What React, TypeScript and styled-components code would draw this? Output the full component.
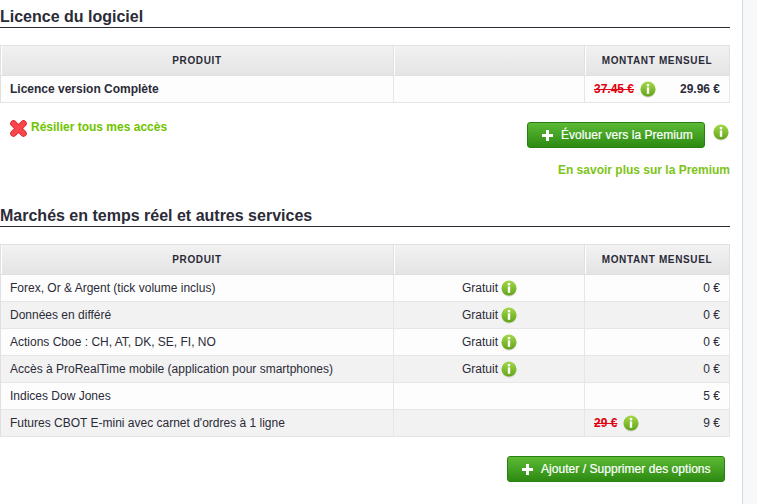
import React from 'react';
import styled, { createGlobalStyle } from 'styled-components';

const GlobalStyle = createGlobalStyle`
  html, body {
    margin: 0;
    padding: 0;
    background: #fff;
    overflow: hidden;
  }
`;

const Page = styled.div`
  display: flex;
  width: 757px;
  height: 504px;
  overflow: hidden;
  font-family: 'Liberation Sans', Arial, sans-serif;
  color: #2b2b38;
`;

const Content = styled.div`
  width: 730px;
  flex: none;
`;

const Rail = styled.div`
  width: 14px;
  margin-left: 12px;
  flex: none;
  background: #f7f8fa;
  border-left: 1px solid #d5d9e0;
`;

const Heading = styled.h2<{ $top: number }>`
  margin: ${({ $top }) => $top}px 0 0;
  padding-bottom: 1px;
  height: 19px;
  font-size: 16px;
  line-height: 19px;
  font-weight: bold;
  border-bottom: 1px solid #2b2b33;
`;

const Table = styled.div`
  margin-top: 17px;
  display: grid;
  grid-template-columns: 393px 191px 145px;
  border-top: 1px solid #e0e0e0;
  border-left: 1px solid #e0e0e0;
`;

const HeadCell = styled.div`
  height: 29px;
  display: flex;
  align-items: center;
  justify-content: center;
  font-size: 10px;
  font-weight: bold;
  letter-spacing: 0.65px;
  background: linear-gradient(#f2f2f2, #e4e4e4);
  border-right: 1px solid #e0e0e0;
  border-bottom: 1px solid #e0e0e0;
  box-shadow: inset 1px 0 0 #fff;
`;

const Cell = styled.div<{ $alt?: boolean; $strong?: boolean }>`
  height: 26px;
  box-sizing: content-box;
  display: flex;
  align-items: center;
  font-size: 12px;
  font-weight: ${({ $strong }) => ($strong ? 'bold' : 'normal')};
  background: ${({ $alt }) => ($alt ? '#f2f2f2' : '#fdfdfd')};
  border-right: 1px solid #e6e6e6;
  border-bottom: 1px solid #e6e6e6;
`;

const NameCell = styled(Cell)`
  padding-left: 9px;
`;

const MiddleCell = styled(Cell)`
  padding-left: 68px;
  gap: 3px;
`;

const AmountCell = styled(Cell)`
  justify-content: space-between;
  padding: 0 9px;
`;

const AmountEnd = styled(Cell)`
  justify-content: flex-end;
  padding-right: 9px;
`;

const OldPrice = styled.span`
  display: flex;
  align-items: center;
  gap: 6px;
  font-weight: bold;
  color: #e0000f;
`;

const Struck = styled.span`
  text-decoration: line-through;
`;

const InfoSvg = styled.svg<{ $offset?: number }>`
  flex: none;
  display: block;
  margin-top: ${({ $offset }) => $offset ?? 0}px;
`;

const InfoIcon: React.FC<{ id: string; offset?: number }> = ({ id, offset }) => (
  <InfoSvg $offset={offset} width="16" height="17" viewBox="0 0 16 17">
    <defs>
      <linearGradient id={id} x1="0" y1="0" x2="0" y2="1">
        <stop offset="0" stopColor="#a5d84b" />
        <stop offset="1" stopColor="#62a518" />
      </linearGradient>
    </defs>
    <ellipse cx="8" cy="9" rx="7.5" ry="7.5" fill="#cfcfc4" />
    <circle cx="8" cy="8" r="7.5" fill={`url(#${id})`} />
    <rect x="6.8" y="3" width="2.4" height="2.4" fill="#fff" />
    <rect x="6.8" y="6.4" width="2.4" height="6.4" fill="#fff" />
  </InfoSvg>
);

const PlusIcon: React.FC = () => (
  <svg width="11" height="11" viewBox="0 0 11 11" style={{ flex: 'none' }}>
    <path d="M4 0h3v4h4v3H7v4H4V7H0V4h4z" fill="#fff" />
  </svg>
);

const CrossIcon: React.FC = () => (
  <svg width="17" height="17" viewBox="0 0 17 17" style={{ flex: 'none' }}>
    <path d="M3.5 3.5 13.5 13.5M13.5 3.5 3.5 13.5" stroke="#d92a30" strokeWidth="6.6" strokeLinecap="round" />
    <path d="M3.5 3.5 13.5 13.5M13.5 3.5 3.5 13.5" stroke="#f8464a" strokeWidth="4.8" strokeLinecap="round" />
  </svg>
);

const ActionRow = styled.div`
  display: flex;
  justify-content: space-between;
  align-items: flex-start;
  padding: 17px 0 0 10px;
`;

const Cancel = styled.a`
  display: flex;
  align-items: flex-start;
  gap: 4px;
  font-size: 12px;
  line-height: 14px;
  font-weight: bold;
  color: #6fc400;
`;

const UpgradeSide = styled.div`
  display: flex;
  flex-direction: column;
  align-items: flex-end;
  padding-top: 2px;
`;

const UpgradeRow = styled.div`
  display: flex;
  align-items: flex-start;
  gap: 8px;
  padding-right: 1px;
`;

const GreenButton = styled.button<{ $width: number }>`
  width: ${({ $width }) => $width}px;
  height: 26px;
  padding: 0 0 0 14px;
  display: flex;
  align-items: center;
  gap: 8px;
  font-family: inherit;
  font-size: 12px;
  font-weight: normal;
  letter-spacing: 0.05px;
  -webkit-text-stroke: 0.2px #fff;
  color: #fff;
  background: linear-gradient(#5cba35, #2d8a12);
  border: 1px solid #2a7f12;
  border-radius: 3px;
`;

const LearnMore = styled.a`
  margin-top: 15px;
  font-size: 12px;
  font-weight: bold;
  color: #7cc417;
`;

const Footer = styled.div`
  display: flex;
  justify-content: flex-end;
  padding: 19px 5px 0 0;
`;

const services = [
  { name: 'Forex, Or & Argent (tick volume inclus)', free: true, amount: '0 €' },
  { name: 'Données en différé', free: true, amount: '0 €' },
  { name: 'Actions Cboe : CH, AT, DK, SE, FI, NO', free: true, amount: '0 €' },
  { name: 'Accès à ProRealTime mobile (application pour smartphones)', free: true, amount: '0 €' },
  { name: 'Indices Dow Jones', free: false, amount: '5 €' },
];

const TableHead: React.FC = () => (
  <>
    <HeadCell>PRODUIT</HeadCell>
    <HeadCell />
    <HeadCell>MONTANT MENSUEL</HeadCell>
  </>
);

const App: React.FC = () => (
  <Page>
    <GlobalStyle />
    <Content>
      <Heading $top={7}>Licence du logiciel</Heading>
      <Table>
        <TableHead />
        <NameCell $strong>Licence version Complète</NameCell>
        <Cell />
        <AmountCell $strong>
          <OldPrice>
            <Struck>37.45 €</Struck>
            <InfoIcon id="i-licence" />
          </OldPrice>
          <span>29.96 €</span>
        </AmountCell>
      </Table>
      <ActionRow>
        <Cancel>
          <CrossIcon />
          Résilier tous mes accès
        </Cancel>
        <UpgradeSide>
          <UpgradeRow>
            <GreenButton $width={178}>
              <PlusIcon />
              Évoluer vers la Premium
            </GreenButton>
            <InfoIcon id="i-upgrade" offset={2} />
          </UpgradeRow>
          <LearnMore>En savoir plus sur la Premium</LearnMore>
        </UpgradeSide>
      </ActionRow>
      <Heading $top={29}>Marchés en temps réel et autres services</Heading>
      <Table>
        <TableHead />
        {services.map((row, i) => (
          <React.Fragment key={row.name}>
            <NameCell $alt={i % 2 === 1}>{row.name}</NameCell>
            {row.free ? (
              <MiddleCell $alt={i % 2 === 1}>
                Gratuit
                <InfoIcon id={`i-free-${i}`} />
              </MiddleCell>
            ) : (
              <Cell $alt={i % 2 === 1} />
            )}
            <AmountEnd $alt={i % 2 === 1}>{row.amount}</AmountEnd>
          </React.Fragment>
        ))}
        <NameCell $alt>Futures CBOT E-mini avec carnet d'ordres à 1 ligne</NameCell>
        <Cell $alt />
        <AmountCell $alt>
          <OldPrice>
            <Struck>29 €</Struck>
            <InfoIcon id="i-futures" />
          </OldPrice>
          <span>9 €</span>
        </AmountCell>
      </Table>
      <Footer>
        <GreenButton $width={218}>
          <PlusIcon />
          Ajouter / Supprimer des options
        </GreenButton>
      </Footer>
    </Content>
    <Rail />
  </Page>
);

export default App;
